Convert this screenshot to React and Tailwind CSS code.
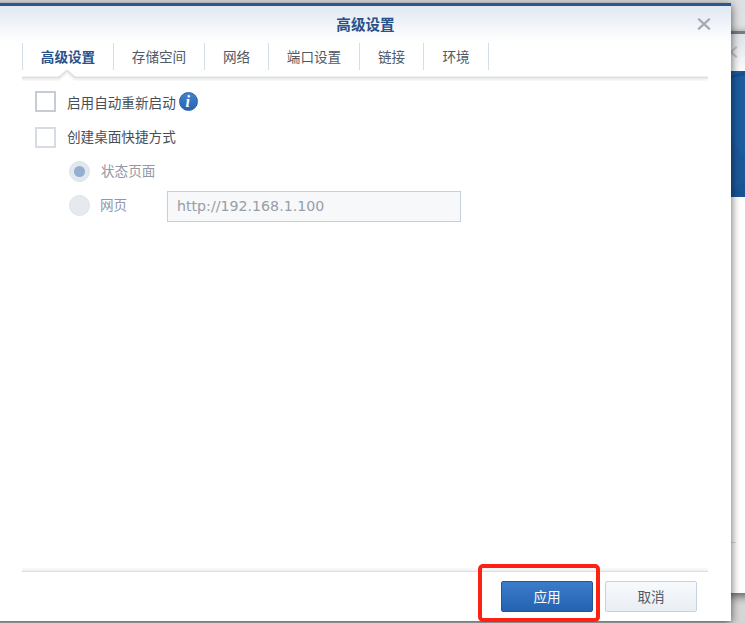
import React from "react";

const tabs = [
  { label: "高级设置", width: "w-[91px]", active: true },
  { label: "存储空间", width: "w-[91px]" },
  { label: "网络", width: "w-[64px]" },
  { label: "端口设置", width: "w-[91px]" },
  { label: "链接", width: "w-[64px]" },
  { label: "环境", width: "w-[65px]" },
];

function CloseIcon({ className }) {
  return (
    <svg className={className} width="14" height="12" viewBox="0 0 14 12" fill="none" aria-hidden="true">
      <path d="M1.2 .6 12.8 11.4M12.8 .6 1.2 11.4" stroke="currentColor" strokeWidth="2.2" />
    </svg>
  );
}

function BackWindow() {
  return (
    <div className="absolute left-[-60px] top-[31px] h-[562px] w-[840px] bg-white shadow-[0_3px_9px_rgba(0,0,0,0.6)]">
      <div className="h-[3px] bg-[#777b84]" />
      <div className="flex h-[37px] items-start bg-gradient-to-b from-[#dfe2e8] to-[#fcfcfd] pl-[784px] pt-[12px]">
        <CloseIcon className="text-[#c4c7cc]" />
      </div>
      <div className="h-[126px] overflow-hidden bg-[#1b5799]">
        <svg className="ml-[784px] block" width="56" height="126" viewBox="0 0 56 126" aria-hidden="true">
          <rect width="56" height="126" fill="#1d5ca0" />
          <path d="M0 8Q12 3 21 0H0ZM7 0H21V4L7 7Z" fill="#15508f" />
          <path d="M7 119Q14 115 21 109V126H7Z" fill="#1a5494" />
          <path d="M7 68Q12 80 21 85V109Q14 115 7 118Z" fill="#1b5899" />
        </svg>
      </div>
      <div className="mt-[345px] h-px w-[796px] bg-[#dcdcdc]" />
    </div>
  );
}

function Tabs() {
  return (
    <div className="ml-[22px] mr-[23px] pt-px">
      <div className="flex h-[27px] w-[467px] border-l border-[#d3deea]">
        {tabs.map((tab) => (
          <div
            key={tab.label}
            className={`${tab.width} shrink-0 border-r border-[#d3deea] text-center leading-[27px] ${
              tab.active ? "font-bold text-[#27518a]" : "text-[#505a64]"
            }`}
          >
            {tab.label}
          </div>
        ))}
      </div>
      <svg className="block" width="686" height="12" viewBox="0 0 686 12" fill="none" aria-hidden="true">
        <path d="M0 8.5H37L45 1.5 53 8.5H686" stroke="#f2f2f2" strokeWidth="4" />
        <path d="M0 7.5H37L45 .5 53 7.5H686" stroke="#dcdddd" strokeWidth="1.3" />
      </svg>
    </div>
  );
}

function InfoIcon() {
  return (
    <span className="ml-[3px] mt-px flex h-[19px] w-[19px] items-center justify-center rounded-full border border-[#2460a8] bg-gradient-to-b from-[#4382cd] to-[#2564b0] pr-px font-['Liberation_Serif',serif] text-[16px] font-bold italic leading-none text-white">
      i
    </span>
  );
}

function Options() {
  return (
    <div className="pl-[35px] text-[#464f59]">
      <div className="flex h-[36px] items-center">
        <span className="mr-[11px] h-[21px] w-[21px] border-2 border-[#c5ccd5] bg-white" />
        <span className="relative top-px">启用自动重新启动</span>
        <InfoIcon />
      </div>
      <div className="flex h-[36px] items-center">
        <span className="mr-[11px] h-[21px] w-[21px] border-2 border-[#d7dce4] bg-white" />
        <span className="relative -top-px">创建桌面快捷方式</span>
      </div>
      <div className="flex h-[33px] items-center pl-[34px] text-[#9299a4]">
        <span className="mr-[11px] flex h-[21px] w-[21px] items-center justify-center rounded-full border border-[#dce3ea] bg-[#e2e7ee]">
          <span className="h-[11px] w-[11px] rounded-full bg-[#93aed0]" />
        </span>
        <span className="relative -top-px">状态页面</span>
      </div>
      <div className="flex h-[35px] items-center pl-[34px] text-[#9299a4]">
        <span className="mr-[10px] h-[21px] w-[21px] rounded-full border border-[#dce3ec] bg-[#e6eaef]" />
        <span className="relative -top-px w-[67px]">网页</span>
        <div className="mt-[2px] h-[31px] w-[294px] border border-[#c5d0dc] bg-[#f6f8fa] pl-[9px] font-['DejaVu_Sans',sans-serif] text-[14.2px] leading-[29px] text-[#989ea8]">
          http://192.168.1.100
        </div>
      </div>
    </div>
  );
}

export default function App() {
  return (
    <div className="relative h-[623px] w-[745px] overflow-hidden bg-gradient-to-b from-[#dedfe1] via-white to-[#d5d5d5] font-['Noto_Sans_CJK_SC',sans-serif] text-[13.6px]">
      <BackWindow />
      <div className="absolute left-[-10px] top-[3px] flex h-[618px] w-[741px] flex-col border-t-[3px] border-[#2b568d] bg-white pl-[10px] shadow-[0_2px_9px_rgba(0,0,0,0.65)]">
        <div className="-ml-[10px] flex h-[36px] shrink-0 items-center bg-gradient-to-b from-[#e1e8f2] to-white pl-[10px]">
          <h1 className="w-[696px] pl-[35px] text-center text-[14.6px] font-bold text-[#27518a]">高级设置</h1>
          <CloseIcon className="ml-px text-[#a5abb3]" />
        </div>
        <Tabs />
        <div className="mt-[1px] flex-1">
          <Options />
        </div>
        <div className="ml-[22px] mr-[23px] h-[5px] border-b border-[#dcdddd] bg-gradient-to-b from-white to-[#eeefef]" />
        <div className="flex h-[49px] shrink-0 items-start pl-[501px] pt-[9px]">
          <button className="h-[31px] w-[92px] rounded-[2px] border border-[#22589b] bg-gradient-to-b from-[#3b7ccb] to-[#2463b0] text-white">
            应用
          </button>
          <button className="ml-3 h-[31px] w-[92px] rounded-[2px] border border-[#c8d2dd] bg-gradient-to-b from-[#f7fafd] to-[#e9eef3] text-[#505a64]">
            取消
          </button>
        </div>
      </div>
      <div className="absolute left-[478px] top-[564px] h-[58px] w-[122px] rounded-[5px] border-4 border-[#ff2114]" />
    </div>
  );
}
